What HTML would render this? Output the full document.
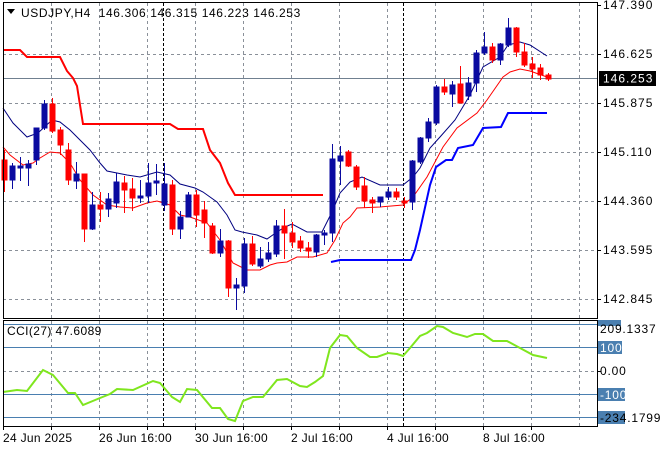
<!DOCTYPE html>
<html><head><meta charset="utf-8"><style>
html,body{margin:0;padding:0;background:#fff;}
svg{display:block;font-family:"Liberation Sans",sans-serif;}
</style></head><body>
<svg width="660" height="450" viewBox="0 0 660 450" xmlns="http://www.w3.org/2000/svg">
<rect width="660" height="450" fill="#fff"/>
<g stroke="#8a9099" stroke-width="1" stroke-dasharray="3,3" fill="none">
<path d="M51.5 3V318M99.5 3V318M147.5 3V318M195.5 3V318M243.5 3V318M291.5 3V318M339.5 3V318M387.5 3V318M435.5 3V318M483.5 3V318M531.5 3V318M579.5 3V318"/>
<path d="M51.5 321V426M99.5 321V426M147.5 321V426M195.5 321V426M243.5 321V426M291.5 321V426M339.5 321V426M387.5 321V426M435.5 321V426M483.5 321V426M531.5 321V426M579.5 321V426"/>
<path d="M3 54.5H597M3 103.5H597M3 152.5H597M3 201.5H597M3 250.5H597M3 299.5H597M3 371.5H597"/>
</g>
<path d="M3 78.5H597" stroke="#708090" stroke-width="1"/>
<g stroke="#4a7fb0" stroke-width="1">
<path d="M3 324.5H597M3 347.5H597M3 394.5H597M3 417.5H597"/>
</g>
<g stroke="#000" stroke-width="1" stroke-dasharray="3,2">
<path d="M163.5 3V426M403.5 3V426"/>
</g>
<polyline fill="none" stroke="#ff0000" stroke-width="2" points="3,50 20,50 27,57 60,57 67,71 73,78 77,86 83,124 170,124 178,129 203,129 210,150 220,163 228,183 235,195 323,195"/>
<polyline fill="none" stroke="#0000ff" stroke-width="2" points="331,262 340,260 411,260 415,250 420,230 424,212 430,185 436,167 446,160 452,160 458,148 473,145 483,128 501,127 508,113 547,113"/>
<polyline fill="none" stroke="#000080" stroke-width="1" points="3,108 13,123 27,137 38,133 52,120 60,122 70,130 80,140 90,150 100,163 107,171 127,175 140,177 157,172 170,175 180,184 195,188 203,192 217,202 227,215 235,230 242,232 257,235 267,239 277,232 285,227 292,224 307,232 322,232 332,212 340,193 350,182 362,177 380,185 403,185 413,177 420,168 430,148 440,137 455,120 470,95 483,67 500,57 508,45 520,42 530,45 547,56"/>
<polyline fill="none" stroke="#ff0000" stroke-width="1" points="3,147 10,155 23,165 33,163 40,158 50,152 60,153 70,163 80,180 93,195 107,205 120,207 133,208 147,203 157,201 170,205 180,215 190,217 207,223 220,240 233,263 247,270 260,270 270,265 277,263 287,262 297,257 313,257 327,253 335,240 343,223 350,217 357,208 380,207 403,205 413,197 427,177 443,147 457,128 477,113 487,100 503,77 510,72 520,69 530,71 547,77"/>
<g stroke-width="1">
<g stroke="#ff0000" fill="#ff0000">
<path d="M4.5 150V192M52.5 98V133M60.5 127V155M68.5 143V185M84.5 174V242M100.5 192V222M124.5 176V213M132.5 178V211M172.5 180V235M196.5 190V227M204.5 201V238M212.5 223V254M228.5 240V297M252.5 236V266M284.5 209V259M292.5 222V248M300.5 236V252M308.5 242V258M348.5 150V167M356.5 165V190M364.5 177V208M372.5 197V213M396.5 188V200M404.5 197V208M444.5 79V95M460.5 66V103M492.5 43V63M516.5 27V57M524.5 43V67M532.5 57V78M540.5 64V80M548.5 73V81"/>
<rect x="2" y="160" width="5" height="20"/><rect x="50" y="104" width="5" height="27"/><rect x="58" y="130" width="5" height="15"/><rect x="66" y="150" width="5" height="30"/><rect x="82" y="174" width="5" height="55"/><rect x="98" y="205" width="5" height="4"/><rect x="122" y="183" width="5" height="7"/><rect x="130" y="189" width="5" height="9"/><rect x="170" y="185" width="5" height="44"/><rect x="194" y="195" width="5" height="20"/><rect x="202" y="210" width="5" height="13"/><rect x="210" y="226" width="5" height="27"/><rect x="226" y="241" width="5" height="47"/><rect x="250" y="244" width="5" height="20"/><rect x="282" y="226" width="5" height="7"/><rect x="290" y="233" width="5" height="9"/><rect x="298" y="241" width="5" height="7"/><rect x="306" y="248" width="5" height="3"/><rect x="346" y="152" width="5" height="14"/><rect x="354" y="167" width="5" height="20"/><rect x="362" y="186" width="5" height="15"/><rect x="370" y="200" width="5" height="3"/><rect x="394" y="192" width="5" height="5"/><rect x="402" y="201" width="5" height="2"/><rect x="442" y="87" width="5" height="5"/><rect x="458" y="84" width="5" height="19"/><rect x="490" y="47" width="5" height="13"/><rect x="514" y="28" width="5" height="24"/><rect x="522" y="52" width="5" height="13"/><rect x="530" y="64" width="5" height="5"/><rect x="538" y="68" width="5" height="7"/><rect x="546" y="75" width="5" height="4"/>
</g>
<g stroke="#0a0aa0" fill="#0a0aa0">
<path d="M12.5 163V189M20.5 157V181M28.5 160V186M36.5 128V165M44.5 100V130M76.5 162V189M92.5 192V230M108.5 193V217M116.5 173V208M140.5 180V203M148.5 163V203M156.5 164V195M164.5 163V211M180.5 211V239M188.5 192V217M220.5 229V257M236.5 278V310M244.5 238V293M260.5 247V268M268.5 242V262M276.5 220V257M316.5 234V257M324.5 230V245M332.5 144V242M340.5 146V185M380.5 197V207M388.5 187V200M412.5 160V210M420.5 137V164M428.5 118V142M436.5 85V125M452.5 81V107M468.5 77V100M476.5 50V92M484.5 32V55M500.5 43V65M508.5 18V47"/>
<rect x="10" y="166" width="5" height="14"/><rect x="18" y="166" width="5" height="2"/><rect x="26" y="164" width="5" height="4"/><rect x="34" y="128" width="5" height="32"/><rect x="42" y="104" width="5" height="24"/><rect x="74" y="174" width="5" height="7"/><rect x="90" y="205" width="5" height="24"/><rect x="106" y="199" width="5" height="10"/><rect x="114" y="182" width="5" height="21"/><rect x="138" y="196" width="5" height="2"/><rect x="146" y="183" width="5" height="13"/><rect x="154" y="181" width="5" height="2"/><rect x="162" y="184" width="5" height="21"/><rect x="178" y="217" width="5" height="12"/><rect x="186" y="195" width="5" height="22"/><rect x="218" y="241" width="5" height="12"/><rect x="234" y="285" width="5" height="3"/><rect x="242" y="244" width="5" height="42"/><rect x="258" y="259" width="5" height="7"/><rect x="266" y="253" width="5" height="6"/><rect x="274" y="226" width="5" height="28"/><rect x="314" y="235" width="5" height="17"/><rect x="322" y="233" width="5" height="2"/><rect x="330" y="159" width="5" height="74"/><rect x="338" y="156" width="5" height="5"/><rect x="378" y="197" width="5" height="5"/><rect x="386" y="192" width="5" height="5"/><rect x="410" y="161" width="5" height="41"/><rect x="418" y="138" width="5" height="24"/><rect x="426" y="122" width="5" height="16"/><rect x="434" y="87" width="5" height="36"/><rect x="450" y="85" width="5" height="9"/><rect x="466" y="83" width="5" height="13"/><rect x="474" y="53" width="5" height="30"/><rect x="482" y="47" width="5" height="6"/><rect x="498" y="44" width="5" height="16"/><rect x="506" y="28" width="5" height="17"/>
</g>
</g>
<polyline fill="none" stroke="#7fe61e" stroke-width="2" points="3,392 17,390 27,391 43,370 53,375 68,393 75,393 83,405 100,398 110,394 117,389 133,390 153,381 160,383 172,397 180,402 187,389 197,390 212,408 220,408 228,419 235,421 243,401 253,397 263,397 277,380 287,379 300,386 307,387 315,382 323,376 330,348 340,335 347,336 357,348 370,357 377,357 388,353 397,354 403,356 410,348 420,336 427,333 437,326 443,327 453,333 467,337 475,334 483,334 493,341 507,341 520,348 533,355 547,358"/>
<g fill="none" stroke="#000" stroke-width="1">
<rect x="3.5" y="2.5" width="594" height="316"/>
<rect x="3.5" y="320.5" width="594" height="106"/>
</g>
<g stroke="#000"><path d="M597 5.5h4M597 54.5h4M597 103.5h4M597 152.5h4M597 201.5h4M597 250.5h4M597 299.5h4M597 371.5h4M51.5 426v4M99.5 426v4M147.5 426v4M195.5 426v4M243.5 426v4M291.5 426v4M339.5 426v4M387.5 426v4M435.5 426v4M483.5 426v4M531.5 426v4M3.5 426v4"/></g>
<g font-size="12" fill="#000" letter-spacing="1">
<text x="603" y="9">147.390</text>
<text x="603" y="58">146.625</text>
<text x="603" y="107">145.875</text>
<text x="603" y="156">145.110</text>
<text x="603" y="205">144.360</text>
<text x="603" y="254">143.595</text>
<text x="603" y="303">142.845</text>
</g>
<rect x="599" y="71" width="57" height="15" fill="#000"/>
<text x="603" y="82.5" font-size="12" fill="#fff" letter-spacing="1">146.253</text>
<rect x="598" y="320" width="23" height="6" fill="#4a7fb0"/>
<rect x="598" y="341" width="24" height="13" fill="#4a7fb0"/>
<rect x="598" y="388" width="27" height="13" fill="#4a7fb0"/>
<rect x="598" y="411" width="27" height="13" fill="#4a7fb0"/>
<g font-size="12" letter-spacing="0.8">
<text x="600" y="333" fill="#000">209.1337</text>
<text x="600" y="352" fill="#fff">100</text>
<text x="600" y="375" fill="#000">0.00</text>
<text x="600" y="399" fill="#fff">-100</text>
<text x="600" y="422" fill="#000">-234.1799</text>
</g>
<path d="M7 9h8l-4 5z" fill="#000"/>
<text x="21" y="17" font-size="12" fill="#000" letter-spacing="0.6" xml:space="preserve">USDJPY,H4  146.306 146.315 146.223 146.253</text>
<text x="7" y="335" font-size="12" fill="#000" letter-spacing="0.4">CCI(27) 47.6089</text>
<g font-size="12" fill="#000" letter-spacing="0.3">
<text x="3" y="442">24 Jun 2025</text>
<text x="99" y="442">26 Jun 16:00</text>
<text x="195" y="442">30 Jun 16:00</text>
<text x="291" y="442">2 Jul 16:00</text>
<text x="387" y="442">4 Jul 16:00</text>
<text x="483" y="442">8 Jul 16:00</text>
</g>
</svg>
</body></html>
